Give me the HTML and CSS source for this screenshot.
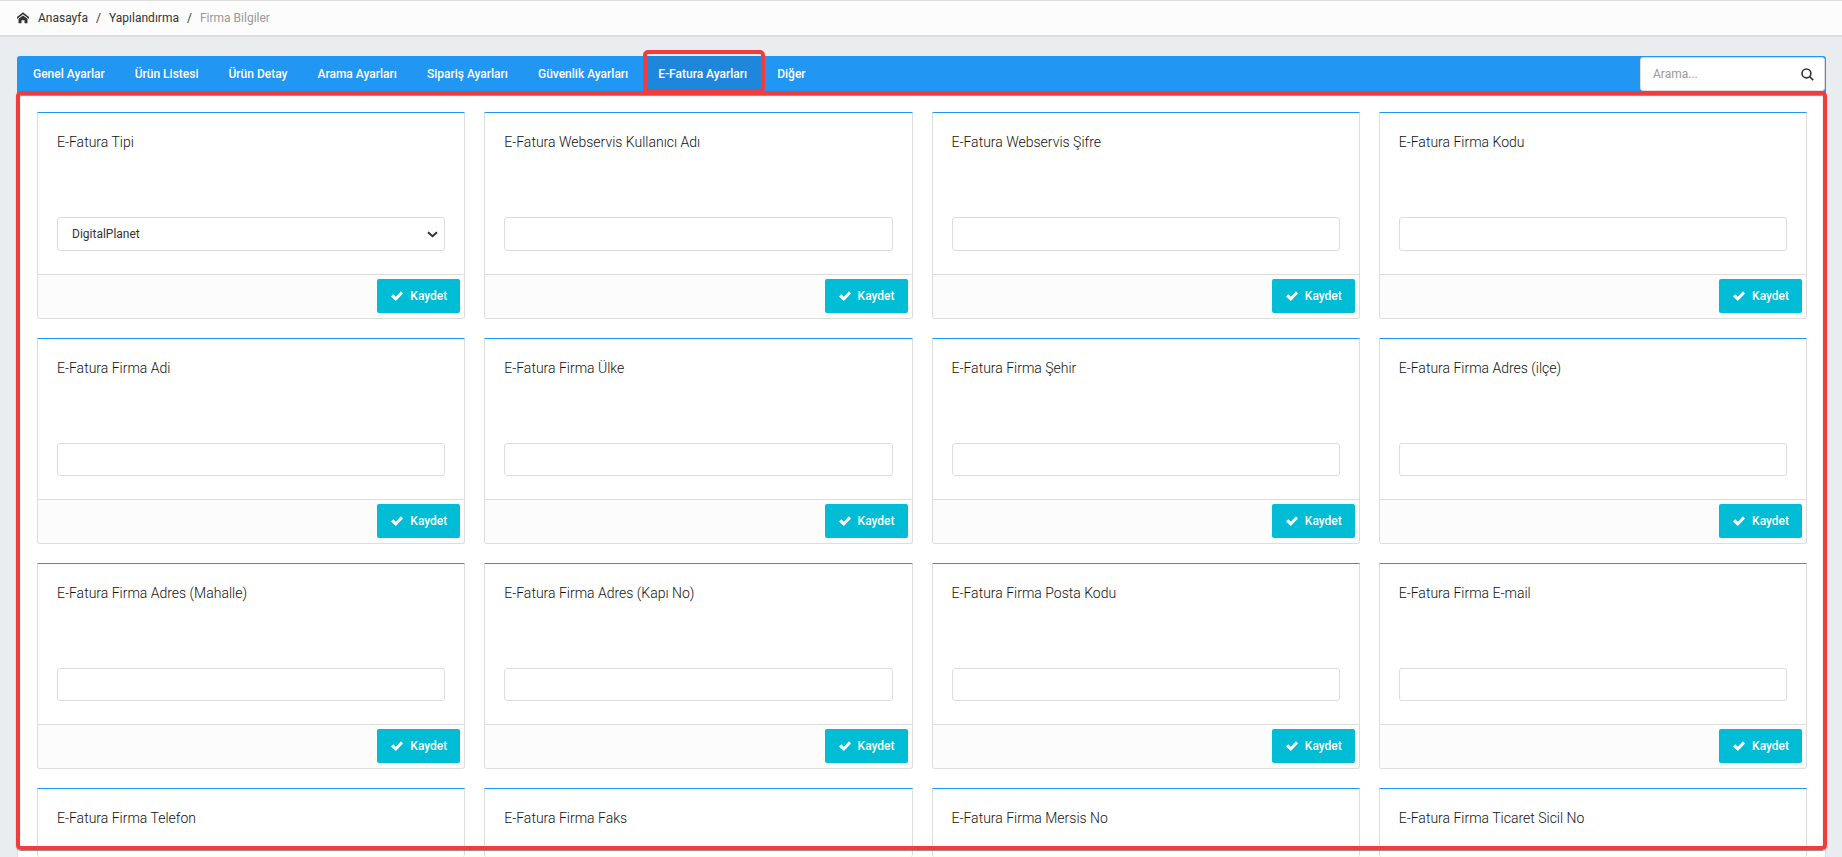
FILE: index.html
```html
<!DOCTYPE html>
<html lang="tr">
<head>
<meta charset="utf-8">
<title>Firma Bilgiler</title>
<link rel="stylesheet" href="styles.css">
</head>
<body>
<svg class="sprite" aria-hidden="true">
  <symbol id="check" viewBox="0 0 16 16"><path d="M13.300 1.800 6.500 9 3 5.800 0 8.800l6.500 6L16 4.800z"/></symbol>
</svg>
<nav class="breadcrumb" aria-label="Konum">
  <a href="#"><svg class="icon-home" viewBox="0 0 16 16"><path d="M16 9.226 8 3.020 0 9.226V6.694L8 .488l8 6.206zM14 9v6h-4v-4H6v4H2V9l6-4.500z"/></svg>Anasayfa</a>
  <a href="#">Yapılandırma</a>
  <span class="current">Firma Bilgiler</span>
</nav>
<main class="panel">
  <header class="navbar">
    <nav class="tabs">
      <a href="#">Genel Ayarlar</a>
      <a href="#">Ürün Listesi</a>
      <a href="#">Ürün Detay</a>
      <a href="#">Arama Ayarları</a>
      <a href="#">Sipariş Ayarları</a>
      <a href="#">Güvenlik Ayarları</a>
      <a href="#" class="active">E-Fatura Ayarları</a>
      <a href="#">Diğer</a>
    </nav>
    <form class="search">
      <input type="text" placeholder="Arama..." aria-label="Arama">
      <button type="button" aria-label="Ara"><svg viewBox="0 0 16 16"><circle cx="6.700" cy="6.700" r="5.400"/><path d="m10.500 10.500 4.500 4.500"/></svg></button>
    </form>
  </header>
  <section class="content">
    <div class="cards" id="cards">
      <form class="card">
        <div class="card-body"><label for="f0">E-Fatura Tipi</label>
          <div class="select-wrap"><select id="f0" class="control"><option>DigitalPlanet</option></select>
          <svg class="chevron" viewBox="0 0 11 7"><path d="m1 1.200 4.500 4 4.500-4"/></svg></div></div>
        <div class="card-footer"><button type="button" class="save"><svg><use href="#check"/></svg>Kaydet</button></div>
      </form>
    </div>
  </section>
</main>
<script src="app.js"></script>
</body>
</html>
```
FILE: app.js
```js
const fields = [
  'E-Fatura Webservis Kullanıcı Adı', 'E-Fatura Webservis Şifre', 'E-Fatura Firma Kodu',
  'E-Fatura Firma Adi', 'E-Fatura Firma Ülke', 'E-Fatura Firma Şehir', 'E-Fatura Firma Adres (ilçe)',
  'E-Fatura Firma Adres (Mahalle)', 'E-Fatura Firma Adres (Kapı No)', 'E-Fatura Firma Posta Kodu', 'E-Fatura Firma E-mail'
];
const collapsed = ['E-Fatura Firma Telefon', 'E-Fatura Firma Faks', 'E-Fatura Firma Mersis No', 'E-Fatura Firma Ticaret Sicil No'];

const cards = fields.map((name, i) => `
  <form class="card">
    <div class="card-body"><label for="f${i + 1}">${name}</label><input type="text" class="control" id="f${i + 1}"></div>
    <div class="card-footer"><button type="button" class="save"><svg><use href="#check"/></svg>Kaydet</button></div>
  </form>`);
const openCards = collapsed.map(name => `
  <div class="card card-open"><h2 class="card-title">${name}</h2></div>`);
document.getElementById('cards').insertAdjacentHTML('beforeend', cards.concat(openCards).join(''));
```
FILE: styles.css
```css
* { box-sizing: border-box; }
body {
  margin: 0;
  height: 100vh;
  overflow: hidden;
  display: flex;
  flex-direction: column;
  background: #e9edf0;
  color: #333;
  font: 13px/20px Roboto, sans-serif;
}
a { color: inherit; text-decoration: none; }
button, input, select { font: inherit; color: inherit; }
.sprite { display: none; }

.breadcrumb {
  display: flex;
  align-items: center;
  height: 37px;
  padding: 0 17px;
  background: #fcfcfc;
  border-top: 1px solid #ddd;
  border-bottom: 2px solid #ddd;
  font-size: 12px;
}
.breadcrumb a { display: flex; align-items: center; }
.breadcrumb a::after { content: "/"; margin: 0 8px; }
.breadcrumb .current { color: #999; }
.icon-home { width: 12px; height: 12px; margin-right: 9px; fill: #333; }

.panel {
  flex: 1;
  min-height: 0;
  display: flex;
  flex-direction: column;
  margin: 19px 16px 0 17px;
}
.navbar {
  display: flex;
  justify-content: space-between;
  height: 37px;
  background: #2196f3;
  border-radius: 3px 3px 0 0;
  color: #fff;
  font-size: 12px;
  font-weight: 500;
}
.tabs { display: flex; padding-left: 1px; }
.tabs a { position: relative; padding: 8px 15px; }
.tabs .active { background: #1e87db; }
.tabs .active::after {
  content: "";
  position: absolute;
  inset: -6px -3px 0 0;
  border: 4px solid #f43b3b;
  border-radius: 5px;
}
.search { position: relative; width: 185px; margin: 1px; }
.search input {
  width: 100%;
  height: 34px;
  padding: 0 36px 0 12px;
  border: 1px solid #ddd;
  border-radius: 3px;
  background: #fff;
  font-weight: 400;
}
.search input::placeholder { color: #999; opacity: 1; }
.search button {
  position: absolute;
  inset: 0 0 auto auto;
  height: 34px;
  padding: 0 11px;
  border: 0;
  background: none;
}
.search svg { display: block; width: 13px; height: 13px; fill: none; stroke: #333; stroke-width: 2; }

.content {
  position: relative;
  flex: 1;
  min-height: 0;
  padding: 19px 18px 0 19px;
  background: #fff;
  border: 1px solid #ddd;
  border-width: 0 1px;
}
.content::after {
  content: "";
  position: absolute;
  inset: -2px -2px 7px;
  border: 4px solid #f43b3b;
  border-radius: 5px;
  box-shadow: 0 1px 1px #888, inset 0 1px 1px #888;
  pointer-events: none;
}
.cards {
  display: grid;
  grid-template-columns: repeat(4, 1fr);
  grid-template-rows: auto auto auto 1fr;
  gap: 19px;
  height: 100%;
}
.card {
  display: flex;
  flex-direction: column;
  border: 1px solid #ddd;
  border-top-color: #2196f3;
  border-radius: 0 0 3px 3px;
}
.card-open { border-bottom: 0; }
.card-body { flex: 1; padding: 19px 19px 23px; }
.card-body label { display: block; height: 85px; }
.card-body label, .card-title { color: #111; font-size: 14px; font-weight: 300; }
.card-title { margin: 19px 19px 0; }
.control {
  display: block;
  width: 100%;
  height: 34px;
  padding: 0 14px;
  border: 1px solid #ddd;
  border-radius: 3px;
  background: #fff;
  font-size: 12px;
  appearance: none;
}
.card:nth-child(n + 5) .control { height: 33px; }
.select-wrap { position: relative; }
.chevron {
  position: absolute;
  right: 7px;
  top: 14px;
  width: 11px;
  height: 7px;
  fill: none;
  stroke: #333;
  stroke-width: 2;
  pointer-events: none;
}
.card-footer {
  display: flex;
  justify-content: flex-end;
  padding: 4px 4px 5px;
  border-top: 1px solid #ddd;
  border-radius: 0 0 3px 3px;
  background: #fcfcfc;
}
.save {
  display: flex;
  align-items: center;
  height: 34px;
  padding: 0 13px 0 14px;
  border: 0;
  border-radius: 2px;
  background: #00bcd4;
  color: #fff;
  font-size: 12px;
  font-weight: 500;
}
.save svg { width: 12px; height: 12px; margin-right: 7px; fill: #fff; }
```
